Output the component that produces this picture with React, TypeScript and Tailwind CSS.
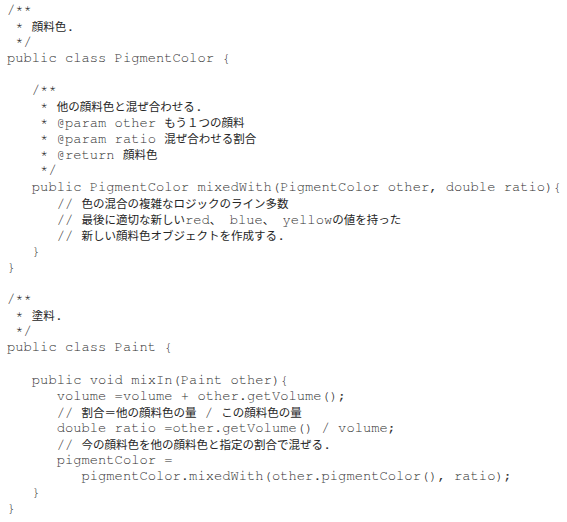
import React from "react";

type Seg = { t: string; j?: boolean };

const J = (t: string): Seg => ({ t, j: true });
const M = (t: string): Seg => ({ t });

const lines: Seg[][] = [
  [M("/**")],
  [M(" * "), J("顔料色"), M(".")],
  [M(" */")],
  [M("public class PigmentColor {")],
  [M("")],
  [M("   /**")],
  [M("    * "), J("他の顔料色と混ぜ合わせる"), M(".")],
  [M("    * @param other "), J("もう１つの顔料")],
  [M("    * @param ratio "), J("混ぜ合わせる割合")],
  [M("    * @return "), J("顔料色")],
  [M("    */")],
  [M("   public PigmentColor mixedWith(PigmentColor other, double ratio){")],
  [M("      // "), J("色の混合の複雑なロジックのライン多数")],
  [M("      // "), J("最後に適切な新しい"), M("red"), J("、"), M(" blue"), J("、"), M(" yellow"), J("の値を持った")],
  [M("      // "), J("新しい顔料色オブジェクトを作成する"), M(".")],
  [M("   }")],
  [M("}")],
  [M("")],
  [M("/**")],
  [M(" * "), J("塗料"), M(".")],
  [M(" */")],
  [M("public class Paint {")],
  [M("")],
  [M("   public void mixIn(Paint other){")],
  [M("      volume =volume + other.getVolume();")],
  [M("      // "), J("割合＝他の顔料色の量"), M(" / "), J("この顔料色の量")],
  [M("      double ratio =other.getVolume() / volume;")],
  [M("      // "), J("今の顔料色を他の顔料色と指定の割合で混ぜる"), M(".")],
  [M("      pigmentColor =")],
  [M("         pigmentColor.mixedWith(other.pigmentColor(), ratio);")],
  [M("   }")],
  [M("}")],
];

export default function App() {
  return (
    <div className="w-[567px] h-[522px] bg-white overflow-hidden pt-[1.5px] pl-[7px] text-[#2f2f2f]">
      {lines.map((segs, i) => (
        <div
          key={i}
          className="h-[16.1px] leading-[16.1px] whitespace-pre text-[13.8px] font-['Nimbus_Mono_PS','FreeMono','Courier_New','Liberation_Mono',monospace]"
        >
          {segs.map((s, k) =>
            s.j ? (
              <span
                key={k}
                className="text-[11.5px] font-['Noto_Sans_CJK_JP',sans-serif] text-[#262626]"
              >
                {s.t}
              </span>
            ) : (
              <span key={k}>{s.t}</span>
            )
          )}
        </div>
      ))}
    </div>
  );
}
